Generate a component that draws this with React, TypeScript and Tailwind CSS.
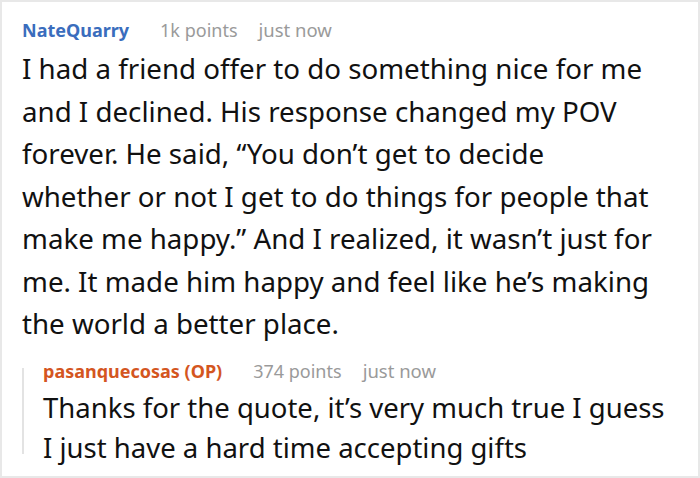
export default function App() {
  return (
    <div className="box-border w-[700px] h-[478px] bg-white border-2 border-[#e8e8e8] overflow-hidden" style={{ fontFamily: '"Noto Sans", sans-serif' }}>
      <div className="pl-[20px] pt-[14px]">
        <div className="flex items-baseline leading-[28px] text-[18px]">
          <span className="font-bold text-[#3a6dbd]">NateQuarry</span>
          <span className="ml-[31px] text-[#9a9a9a]">1k points</span>
          <span className="ml-[21px] text-[18.5px] text-[#9a9a9a]">just now</span>
        </div>
        <p className="mt-[3px] text-[27.7px] leading-[42.5px] text-[#111111]">
          I had a friend offer to do something nice for me
          <br />
          and I declined. His response changed my POV
          <br />
          forever. He said, “You don’t get to decide
          <br />
          whether or not I get to do things for people that
          <br />
          make me happy.” And I realized, it wasn’t just for
          <br />
          me. It made him happy and feel like he’s making
          <br />
          the world a better place.
        </p>
        <div className="mt-[16px] flex">
          <div className="w-[2px] shrink-0 bg-[#e3e3e3] mt-[7px] mb-[14px]" />
          <div className="pl-[19px]">
            <div className="flex items-baseline leading-[20px]">
              <span className="text-[18px] font-bold text-[#d4561f]">pasanquecosas (OP)</span>
              <span className="ml-[31px] text-[18px] text-[#9a9a9a]">374 points</span>
              <span className="ml-[21px] text-[18.5px] text-[#9a9a9a]">just now</span>
            </div>
            <p className="mt-[7px] text-[27.5px] leading-[40px] text-[#111111]">
              Thanks for the quote, it’s very much true I guess
              <br />
              I just have a hard time accepting gifts
            </p>
          </div>
        </div>
      </div>
    </div>
  );
}
